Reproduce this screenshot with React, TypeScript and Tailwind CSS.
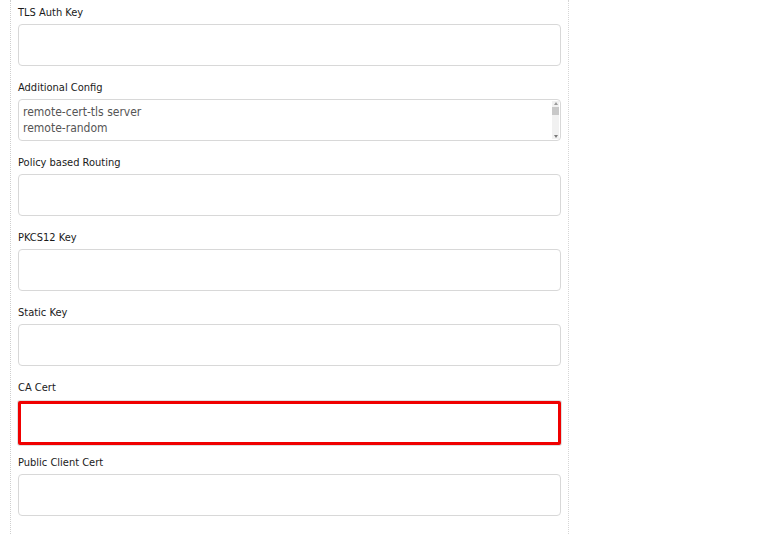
const fields = [
    { label: "TLS Auth Key" },
    { label: "Additional Config", value: ["remote-cert-tls server", "remote-random"] },
    { label: "Policy based Routing" },
    { label: "PKCS12 Key" },
    { label: "Static Key" },
    { label: "CA Cert", error: true },
    { label: "Public Client Cert" },
];

const font = { fontFamily: '"DejaVu Sans Condensed", "DejaVu Sans", sans-serif' };

const App = () => {
    return (
        <div className="w-[768px] h-[534px] bg-white overflow-hidden" style={font}>
            <div className="ml-[10px] w-[559px] h-full border-l border-dotted border-l-[#cfcfcf] border-r border-r-[#d6d6d6] pl-[7px] pr-[8px]">
                {fields.map((field, index) => (
                    <div key={index} className={field.error ? "mb-[5px]" : "mb-[9px]"}>
                        <div className="h-[24px] pt-[5px] text-[11px] leading-[16px] text-[#1a1a1a]">{field.label}</div>
                        {field.value ? (
                            <div className="relative h-[42px] w-[543px] rounded-[4px] border border-[#d8d8d8] bg-white px-[4px] pt-[4px] text-[12px] leading-[16px] text-[#555]">
                                {field.value.map((line) => (
                                    <div key={line}>{line}</div>
                                ))}
                                <div className="absolute right-[1px] top-[1px] bottom-[1px] w-[7px] bg-[#f1f1f1] flex flex-col items-center justify-between py-[1px]">
                                    <div className="w-0 h-0 border-l-[2px] border-r-[2px] border-b-[3px] border-l-transparent border-r-transparent border-b-[#9a9a9a]" />
                                    <div className="absolute top-[6px] left-0 w-[7px] h-[8px] bg-[#c8c8c8]" />
                                    <div className="w-0 h-0 border-l-[2px] border-r-[2px] border-t-[3px] border-l-transparent border-r-transparent border-t-[#7a7a7a]" />
                                </div>
                            </div>
                        ) : field.error ? (
                            <div className="mt-[2px] h-[44px] w-[543px] rounded-[2px] border-[3px] border-[#f00000] bg-white shadow-[0_0_0_1px_#e0e0e0]" />
                        ) : (
                            <div className="h-[42px] w-[543px] rounded-[4px] border border-[#d8d8d8] bg-white" />
                        )}
                    </div>
                ))}
            </div>
        </div>
    );
};

export default App;
